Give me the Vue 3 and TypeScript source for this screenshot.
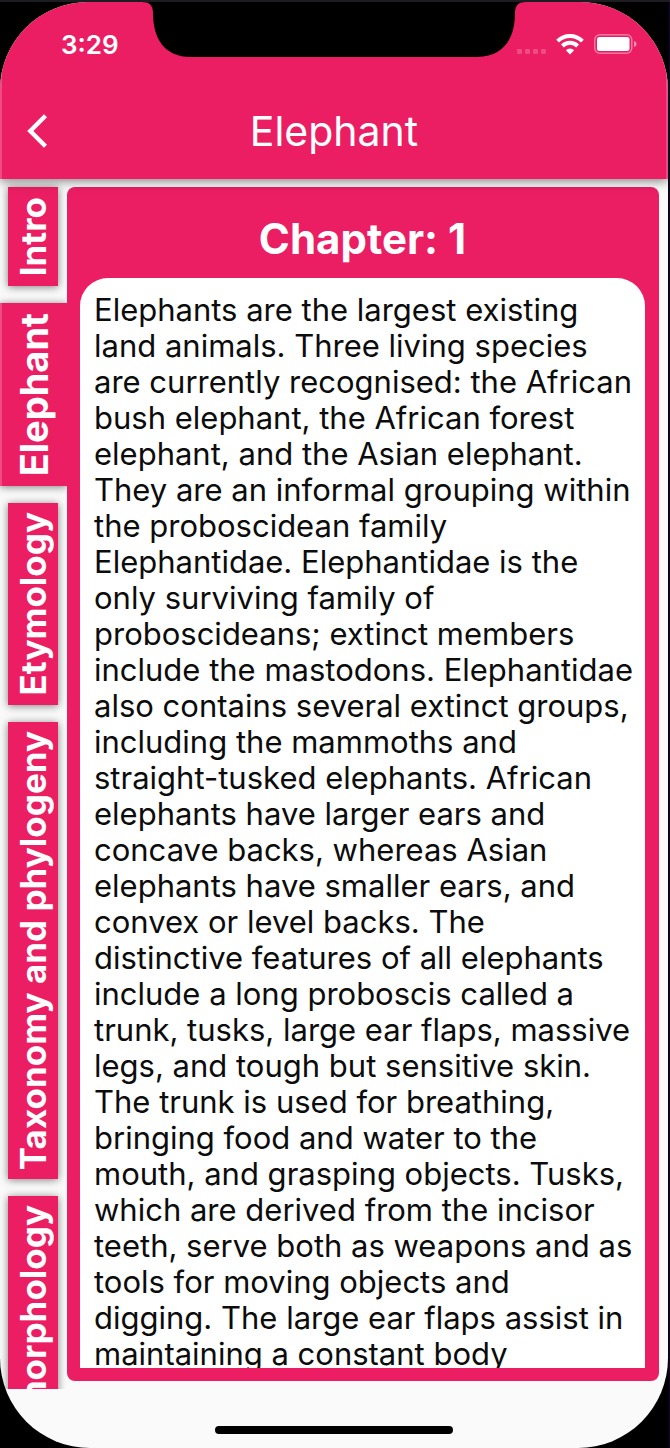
<script setup lang="ts">
import { ref } from 'vue'

interface Chapter {
  id: string
  label: string
}

const chapters: Chapter[] = [
  { id: 'intro', label: 'Intro' },
  { id: 'elephant', label: 'Elephant' },
  { id: 'etymology', label: 'Etymology' },
  { id: 'taxonomy', label: 'Taxonomy and phylogeny' },
  { id: 'morphology', label: 'Anatomy and morphology' },
]

const active = ref<string>('elephant')

const lines: string[] = [
  'Elephants are the largest existing',
  'land animals. Three living species',
  'are currently recognised: the African',
  'bush elephant, the African forest',
  'elephant, and the Asian elephant.',
  'They are an informal grouping within',
  'the proboscidean family',
  'Elephantidae. Elephantidae is the',
  'only surviving family of',
  'proboscideans; extinct members',
  'include the mastodons. Elephantidae',
  'also contains several extinct groups,',
  'including the mammoths and',
  'straight-tusked elephants. African',
  'elephants have larger ears and',
  'concave backs, whereas Asian',
  'elephants have smaller ears, and',
  'convex or level backs. The',
  'distinctive features of all elephants',
  'include a long proboscis called a',
  'trunk, tusks, large ear flaps, massive',
  'legs, and tough but sensitive skin.',
  'The trunk is used for breathing,',
  'bringing food and water to the',
  'mouth, and grasping objects. Tusks,',
  'which are derived from the incisor',
  'teeth, serve both as weapons and as',
  'tools for moving objects and',
  'digging. The large ear flaps assist in',
  'maintaining a constant body',
]
const body = lines.join('\n')
</script>

<template>
  <div class="device">
    <div class="screen">
      <svg class="notch" width="384" height="55" viewBox="0 0 384 55" aria-hidden="true">
        <path d="M0 0C7 0 11 3 11 11C11 36 22 55 49 55H335C362 55 373 36 373 11C373 3 377 0 384 0Z" fill="#000" />
      </svg>

      <header class="top">
        <div class="status">
          <time class="clock">3:29</time>
          <div class="indicators">
            <span class="dots"><i></i><i></i><i></i><i></i></span>
            <svg width="28" height="22" viewBox="0 0 28 22" aria-hidden="true">
              <g fill="none" stroke="#fff" stroke-width="4">
                <path d="M1.6 8.2A17.5 17.5 0 0 1 26.4 8.2" />
                <path d="M6.4 13A10.7 10.7 0 0 1 21.6 13" />
              </g>
              <path d="M14 21.5L9.8 17.3A6 6 0 0 1 18.2 17.3Z" fill="#fff" />
            </svg>
            <svg width="43" height="20" viewBox="0 0 43 20" aria-hidden="true">
              <rect x="0.75" y="0.75" width="37" height="18.5" rx="5" fill="none" stroke="#fff" stroke-opacity="0.4" stroke-width="1.5" />
              <rect x="3" y="3" width="32.5" height="14" rx="2.5" fill="#fff" />
              <path d="M40 7C41.7 7.6 42.5 8.7 42.5 10S41.7 12.4 40 13Z" fill="#fff" fill-opacity="0.5" />
            </svg>
          </div>
        </div>
        <div class="bar">
          <button class="back" type="button" aria-label="Back">
            <svg width="22" height="34" viewBox="0 0 22 34" aria-hidden="true">
              <path d="M18.5 1.8L3.3 17L18.5 32.2" fill="none" stroke="#fff" stroke-width="4.4" />
            </svg>
          </button>
          <h1>Elephant</h1>
        </div>
      </header>

      <main class="content">
        <nav class="tabs" aria-label="Chapters">
          <button
            v-for="c in chapters"
            :key="c.id"
            type="button"
            class="tab"
            :class="{ active: c.id === active }"
            @click="active = c.id"
          >
            <span>{{ c.label }}</span>
          </button>
        </nav>
        <article class="card">
          <h2>Chapter: 1</h2>
          <div class="paper">
            <p>{{ body }}</p>
          </div>
        </article>
      </main>

      <footer class="home"><span></span></footer>
    </div>
  </div>
</template>

<style>
body {
  margin: 0;
  background: #000;
}
</style>

<style scoped>
* {
  box-sizing: border-box;
}
.device {
  height: 100vh;
  padding: 2px 2px 0 0;
  background: #000;
  box-shadow: inset 0 2px #1c1c22, inset -1px 0 #170038;
  font-family: Inter, "Liberation Sans", sans-serif;
}
.screen {
  position: relative;
  height: 100%;
  display: flex;
  flex-direction: column;
  overflow: hidden;
  border-radius: 88px 88px 90px 90px;
  background: #fafafa;
}
.notch {
  position: absolute;
  z-index: 3;
  top: 0;
  left: 50%;
  transform: translateX(-50%);
}
.top {
  position: relative;
  z-index: 2;
  flex: none;
  background: #eb1e63;
  color: #fff;
  box-shadow: inset 2px 0 rgba(255, 255, 255, 0.2), inset -2px 0 rgba(255, 255, 255, 0.2),
    0 2px 10px rgba(0, 0, 0, 0.5);
}
.status {
  display: flex;
  justify-content: space-between;
  align-items: center;
  height: 84px;
  padding: 0 31px 0 61px;
}
.clock {
  font-size: 26px;
  font-weight: 600;
}
.indicators {
  display: flex;
  align-items: center;
  gap: 10px;
}
.dots {
  display: flex;
  gap: 3px;
  padding-top: 14px;
}
.dots i {
  width: 5px;
  height: 5px;
  border-radius: 1px;
  background: rgba(255, 255, 255, 0.2);
}
.bar {
  display: grid;
  grid-template-columns: 76px 1fr 76px;
  align-items: center;
  height: 93px;
  padding-bottom: 4px;
}
.back {
  display: flex;
  justify-content: center;
  padding: 0;
  border: 0;
  background: none;
}
h1 {
  margin: 0;
  font-size: 41px;
  font-weight: 400;
  line-height: 48px;
  text-align: center;
}
.content {
  flex: 1;
  min-height: 0;
  display: flex;
}
.tabs {
  flex: none;
  width: 67px;
  display: flex;
  flex-direction: column;
  gap: 17px;
  padding: 8px 9px 0 8px;
  overflow: hidden;
}
.tab {
  flex: none;
  display: flex;
  align-items: center;
  justify-content: center;
  width: 50px;
  min-height: 99px;
  padding: 9px 0;
  border: 0;
  background: #eb1e63;
  color: #fff;
  box-shadow: 0 1px 8px rgba(0, 0, 0, 0.5);
  font-family: inherit;
  font-size: 35px;
  font-weight: 700;
  line-height: 42px;
}
.tab span {
  writing-mode: vertical-rl;
  transform: rotate(180deg);
}
.tab.active {
  width: 67px;
  margin-left: -8px;
  padding: 10px 0;
  font-size: 38px;
  box-shadow: inset 2px 0 rgba(255, 255, 255, 0.2), 0 1px 8px rgba(0, 0, 0, 0.5);
}
.card {
  flex: 1;
  min-width: 0;
  display: flex;
  flex-direction: column;
  margin: 8px 9px 8px 0;
  padding: 0 14px 13px 13px;
  border-radius: 8px;
  background: #eb1e63;
}
h2 {
  flex: none;
  margin: 0;
  padding: 28px 0 15px;
  color: #fff;
  font-size: 42px;
  font-weight: 700;
  line-height: 48px;
  text-align: center;
}
.paper {
  flex: 1;
  min-height: 0;
  overflow: hidden;
  padding: 14px 0 0 14px;
  border-radius: 28px 28px 0 0;
  background: #fff;
}
p {
  margin: 0;
  color: #0c0c0c;
  font-size: 31px;
  line-height: 36px;
  white-space: pre;
}
.home {
  flex: none;
  display: flex;
  justify-content: center;
  align-items: flex-end;
  height: 59px;
  padding-bottom: 14px;
}
.home span {
  width: 238px;
  height: 8px;
  border-radius: 4px;
  background: #000;
}
</style>
